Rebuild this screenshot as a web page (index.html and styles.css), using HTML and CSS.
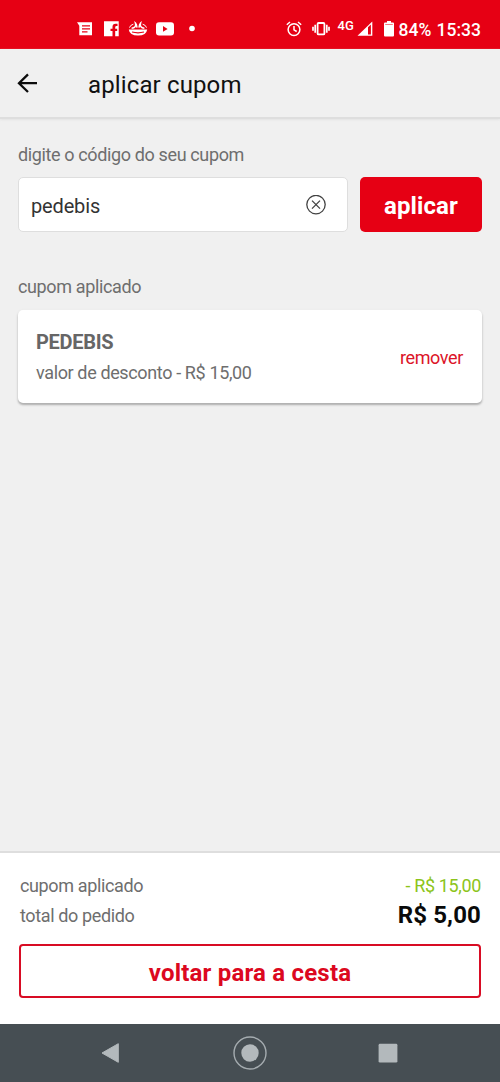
FILE: index.html
```html
<!DOCTYPE html>
<html lang="pt-BR">
<head>
<meta charset="utf-8">
<title>aplicar cupom</title>
<link rel="stylesheet" href="styles.css">
</head>
<body>
<div class="status">
  <div class="notifications">
    <svg width="16" height="16" viewBox="0 0 16 16"><path fill="#fff" fill-rule="evenodd" d="M0 1.3H15V14.3H2.3V4.8ZM5 4.2V5.4H13V4.2ZM5 7.2V8.4H13V7.2ZM5 10.2V11.4H10.5V10.2Z"/></svg>
    <svg width="16" height="16" viewBox="0 0 16 16"><path fill="#fff" d="M0 .3H14.7V15.3H11.2V10H13.2V7.7H11.2V6.4Q11.2 5 12.5 5H13.5V2.8H11.5Q8.5 2.8 8.5 5.8V7.7H6.5V10H8.5V15.3H0Z"/></svg>
    <svg width="20" height="16" viewBox="0 0 20 16" fill="none"><path fill="#fff" d="M.8 8.6H19.2Q18.5 14.6 10 14.6T.8 8.6Z"/><path d="M4 11Q10 12.6 16 11" stroke="#e60014" stroke-width="1.2"/><path d="M1.5 6.6Q2.2 4 5.4 3.2M18.5 6.6Q17.8 4 14.6 3.2" stroke="#fff" stroke-width="1"/><path d="M3.6 7.3Q8.6 6.8 7.4 2Q8.6 3 9 6.6M16.4 7.3Q11.4 6.8 12.6 2Q11.4 3 11 6.6" stroke="#fff" stroke-width="1.5"/></svg>
    <svg width="18" height="16" viewBox="0 0 18 16"><rect y="1.2" width="18" height="13.2" rx="3" fill="#fff"/><path d="M7 5L11.6 7.9L7 10.8Z" fill="#e60014"/></svg>
    <svg width="6" height="16" viewBox="0 0 6 16"><circle cx="3" cy="7.5" r="2.8" fill="#fff"/></svg>
  </div>
  <div class="system">
    <svg width="16" height="16" viewBox="0 0 16 16" fill="none" stroke="#fff" stroke-width="1.5"><circle cx="8" cy="8.6" r="5.9"/><path d="M8 5V8.9L10.7 10.5M.8 3.7L4 1M15.2 3.7L12 1"/></svg>
    <svg class="vibrate" width="18" height="16" viewBox="0 0 18 16" fill="none" stroke="#fff"><rect x="5.6" y="2" width="6.8" height="11.4" rx="1" stroke-width="1.8"/><path d="M3.2 3.8V11.8M14.8 3.8V11.8M1 5.8V9.8M17 5.8V9.8" stroke-width="1.7"/></svg>
    <span class="network">4G</span>
    <svg class="signal" width="16" height="16" viewBox="0 0 16 16"><path d="M.5 14.8L15.3.4V14.8Z" fill="#fff"/><path d="M11 6.3L13.9 3.5V13.4H11Z" fill="#e60014"/></svg>
    <svg class="battery" width="10" height="16" viewBox="0 0 10 16"><path d="M3 0H7V1.6H9Q10 1.6 10 2.6V14.6Q10 15.6 9 15.6H1Q0 15.6 0 14.6V2.6Q0 1.6 1 1.6H3Z" fill="#fff"/><path d="M1.2 3.5H8.8" stroke="#f57983" stroke-width="1"/></svg>
    <span class="percent">84%</span>
    <span class="clock">15:33</span>
  </div>
</div>
<header class="header">
  <svg width="20" height="20" viewBox="0 0 20 20" fill="none" stroke="#0c0c0c" stroke-width="2.3"><path d="M20 10.2H2M11 1.4L2 10.2L11 19"/></svg>
  <h1 class="title">aplicar cupom</h1>
</header>
<main class="main">
  <p class="label">digite o código do seu cupom</p>
  <div class="form">
    <div class="field">
      <span class="value">pedebis</span>
      <svg width="20" height="20" viewBox="0 0 20 20" fill="none" stroke="#424242" stroke-width="1.3"><circle cx="10" cy="9.6" r="9.2"/><path d="M6 5.6L14 13.6M14 5.6L6 13.6"/></svg>
    </div>
    <button class="apply">aplicar</button>
  </div>
  <p class="label applied">cupom aplicado</p>
  <section class="card">
    <div>
      <div class="code">PEDEBIS</div>
      <div class="discount">valor de desconto - R$ 15,00</div>
    </div>
    <span class="remove">remover</span>
  </section>
</main>
<footer class="summary">
  <div class="row"><span>cupom aplicado</span><span class="saving">- R$ 15,00</span></div>
  <div class="row"><span>total do pedido</span><span class="total">R$ 5,00</span></div>
  <button class="back">voltar para a cesta</button>
</footer>
<nav class="nav">
  <svg width="20" height="22" viewBox="0 0 20 22"><path d="M18.3 1.7V20.3L2 11Z" fill="#b3b9bc" stroke="#b3b9bc" stroke-linejoin="round"/></svg>
  <svg width="36" height="36" viewBox="0 0 36 36"><circle cx="18" cy="18" r="16" fill="none" stroke="#a5acb0" stroke-width="1.4"/><circle cx="18" cy="18" r="8.7" fill="#b3b9bc"/></svg>
  <svg width="20" height="20" viewBox="0 0 20 20"><rect x=".6" y=".8" width="18.8" height="18.8" rx="1.4" fill="#b3b9bc"/></svg>
</nav>
</body>
</html>
```
FILE: styles.css
```css
* { box-sizing: border-box; }
body {
  margin: 0;
  height: 1082px;
  display: flex;
  flex-direction: column;
  background: #f0f0f0;
  font-family: Roboto, sans-serif;
  color: #6e6e6e;
}
h1, p { margin: 0; font-weight: 400; }
button { font-family: inherit; font-weight: 700; padding: 0; }
svg { display: block; flex: none; }
.status {
  height: 49px;
  flex: none;
  background: #e60014;
  color: #fff;
  display: flex;
  justify-content: space-between;
  padding: 21px 19px 0 77px;
}
.notifications { display: flex; gap: 9px; height: 16px; }
.notifications svg:nth-child(2) { margin-left: 2px; }
.notifications svg:nth-child(3) { margin-left: -1px; }
.notifications svg:nth-child(4) { margin-left: -1px; }
.notifications svg:last-child { margin-left: 6px; }
.system { display: flex; height: 16px; align-items: center; }
.vibrate { margin-left: 10px; }
.network { font-size: 13px; line-height: 12px; font-weight: 500; margin: -6px 0 0 8px; width: 17px; }
.signal { margin-left: 2px; }
.battery { margin-left: 11px; }
.percent { font-size: 17.5px; font-weight: 500; margin: 1px 0 0 5px; width: 32px; }
.clock { font-size: 17.5px; font-weight: 500; margin: 1px 0 0 6px; }
.header {
  height: 70px;
  flex: none;
  display: flex;
  align-items: center;
  gap: 51px;
  padding: 0 17px;
  border-bottom: 2px solid #dedede;
  box-shadow: 0 1px 2px #e4e4e4;
}
.title { font-size: 24px; letter-spacing: .13px; line-height: 28px; color: #111; padding-top: 3px; }
.main { flex: 1; padding: 26px 18px 0; }
.label, .discount, .remove, .row { font-size: 18px; letter-spacing: -.37px; }
.label { line-height: 20px; }
.form { display: flex; gap: 12px; margin-top: 12px; height: 55px; }
.field {
  flex: 1;
  display: flex;
  align-items: center;
  justify-content: space-between;
  background: #fff;
  border: 1.5px solid #dedede;
  border-radius: 5px;
  padding: 0 21px 0 12px;
}
.value { font-size: 20px; letter-spacing: -.15px; color: #333; padding-top: 2px; }
.apply {
  width: 122px;
  border: 0;
  border-radius: 5px;
  background: #e60014;
  color: #fff;
  font-size: 24px;
  letter-spacing: .1px;
  padding-top: 2px;
}
.applied { margin-top: 45px; }
.card {
  margin-top: 13px;
  height: 93px;
  display: flex;
  justify-content: space-between;
  align-items: center;
  padding: 0 19px 0 18px;
  background: #fff;
  border-radius: 5px;
  box-shadow: 0 2px 2px #b0b0b0, 0 1px 3px #ddd;
}
.code { font-size: 20px; letter-spacing: -.3px; line-height: 24px; font-weight: 700; color: #666; }
.discount { line-height: 20px; margin-top: 9px; }
.remove { color: #dc1428; padding-top: 2px; }
.summary {
  height: 173px;
  flex: none;
  background: #fff;
  padding: 17px 19px 0;
  border-top: 2px solid #dedede;
}
.row { height: 30px; display: flex; justify-content: space-between; align-items: center; padding-left: 1px; }
.saving { color: #8cc41a; }
.total { font-size: 24px; letter-spacing: .15px; font-weight: 700; color: #0a0a0a; }
.back {
  display: block;
  width: 462px;
  height: 54px;
  margin-top: 14px;
  border: 2px solid #d80c24;
  border-radius: 4px;
  background: #fff;
  color: #dc0820;
  font-size: 24px;
  letter-spacing: .2px;
  padding-top: 3px;
}
.nav {
  height: 58px;
  flex: none;
  background: #464e53;
  display: flex;
  align-items: center;
  justify-content: space-between;
  padding: 0 102px 0 100px;
}
.nav svg:nth-child(2) { margin-left: 2px; }
```
